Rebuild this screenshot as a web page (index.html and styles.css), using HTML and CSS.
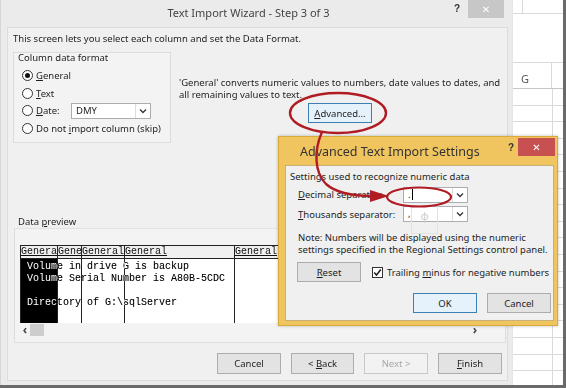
FILE: index.html
```html
<!DOCTYPE html>
<html>
<head>
<meta charset="utf-8">
<link rel="stylesheet" href="styles.css">
</head>
<body>
<div class="screen">
  <div class="wizard">
    <div class="wtitle">
      <span class="wtitle-text">Text Import Wizard - Step 3 of 3</span>
      <span class="help">?</span>
      <span class="xbtn xgrey">&#x2715;</span>
    </div>
    <div class="wclient">
      <p class="intro">This screen lets you select each column and set the Data Format.</p>
      <div class="toprow">
        <div class="group format">
          <div class="glabel">Column data format</div>
          <div class="radio"><span class="rb on"></span><span><u>G</u>eneral</span></div>
          <div class="radio"><span class="rb"></span><span><u>T</u>ext</span></div>
          <div class="radio"><span class="rb"></span><span class="datelbl"><u>D</u>ate:</span>
            <span class="combo datecombo"><span class="cval">DMY</span><span class="carrow"><svg width="8" height="6" viewBox="0 0 8 6"><path d="M1 1.5 L4 4.5 L7 1.5" fill="none" stroke="#333" stroke-width="1.3"/></svg></span></span>
          </div>
          <div class="radio"><span class="rb"></span><span>Do not <u>i</u>mport column (skip)</span></div>
        </div>
        <div class="desc">
          <p class="desctext">'General' converts numeric values to numbers, date values to dates, and<br>all remaining values to text.</p>
          <div class="btn focus advbtn"><span><u>A</u>dvanced...</span></div>
        </div>
      </div>
      <div class="plabel">Data <u>p</u>review</div>
      <div class="pgroup">
        <div class="preview">
          <div class="phead">
            <span class="pc c1"><u>Genera</u></span><span class="pc c2"><u>Gene</u></span><span class="pc c3"><u>General</u></span><span class="pc c4"><u>General</u></span><span class="pc c5"><u>General</u></span>
          </div>
          <div class="pbody">
            <div class="pcols">
              <span class="pcol c1 sel"></span><span class="pcol c2"></span><span class="pcol c3"></span><span class="pcol c4"></span><span class="pcol c5"></span>
            </div>
            <div class="ptext">
              <div class="pline"> Volume in drive G is backup</div>
              <div class="pline"> Volume Serial Number is A80B-5CDC</div>
              <div class="pline"> </div>
              <div class="pline"> Directory of G:\sqlServer</div>
            </div>
          </div>
          <div class="hscroll">
            <span class="sarrow">&lsaquo;</span><span class="thumb"></span><span class="sfill"></span><span class="sarrow">&rsaquo;</span>
          </div>
        </div>
      </div>
      <div class="buttons">
        <div class="btn"><span>Cancel</span></div>
        <div class="btn"><span>&lt; <u>B</u>ack</span></div>
        <div class="btn disabled"><span>Next &gt;</span></div>
        <div class="btn"><span><u>F</u>inish</span></div>
      </div>
    </div>
  </div>
  <div class="sheet">
    <div class="srow s0"><span class="scell a"></span><span class="scell b"></span></div>
    <div class="srow s1"></div>
    <div class="srow shead"><span class="scell g">G</span><span class="scell b"></span></div>
    <div class="srows"></div>
  </div>
</div>

<div class="adv">
  <div class="atitle">
    <span class="atitle-text">Advanced Text Import Settings</span>
    <span class="help ahelp">?</span>
    <span class="xbtn xred">&#x2715;</span>
  </div>
  <div class="aclient">
    <div class="asub">Settings used to recognize numeric data</div>
    <div class="arow">
      <span class="alabel"><u>D</u>ecimal separator:</span>
      <span class="combo acombo"><span class="cval">.<span class="caret"></span></span><span class="carrow"><svg width="8" height="6" viewBox="0 0 8 6"><path d="M1 1.5 L4 4.5 L7 1.5" fill="none" stroke="#333" stroke-width="1.3"/></svg></span></span>
    </div>
    <div class="arow">
      <span class="alabel"><u>T</u>housands separator:</span>
      <span class="combo acombo"><span class="cval">,</span><span class="carrow"><svg width="8" height="6" viewBox="0 0 8 6"><path d="M1 1.5 L4 4.5 L7 1.5" fill="none" stroke="#333" stroke-width="1.3"/></svg></span></span>
      <span class="ghost">ф</span>
    </div>
    <p class="anote">Note: Numbers will be displayed using the numeric<br>settings specified in the Regional Settings control panel.</p>
    <div class="arow2">
      <div class="btn"><span><u>R</u>eset</span></div>
      <div class="check"><span class="cb"><svg width="9" height="9" viewBox="0 0 9 9"><path d="M1.2 4.6 L3.5 7 L7.8 1.5" fill="none" stroke="#222" stroke-width="1.5"/></svg></span><span>Trailing <u>m</u>inus for negative numbers</span></div>
    </div>
    <div class="abtns">
      <div class="btn focus"><span>OK</span></div>
      <div class="btn"><span>Cancel</span></div>
    </div>
  </div>
</div>

<svg class="annot" width="566" height="388" viewBox="0 0 566 388">
  <ellipse cx="338" cy="113" rx="48" ry="20" fill="none" stroke="#b01c24" stroke-width="2.4"/>
  <ellipse cx="419" cy="197" rx="32" ry="9.5" fill="none" stroke="#b01c24" stroke-width="2.2"/>
  <path d="M322 132 C314 150 314 172 326 184 C336 193 352 196 372 196" fill="none" stroke="#b01c24" stroke-width="2.4"/>
  <path d="M370 190 L389 196 L370 202 Z" fill="#b01c24"/>
</svg>
</body>
</html>
```

FILE: styles.css
```css
* { box-sizing: border-box; }
html, body { margin: 0; padding: 0; }
body {
  width: 566px; height: 388px; overflow: hidden; position: relative;
  background: #6a6a6a;
  font-family: "Noto Sans", "Open Sans", sans-serif;
  font-size: 9.5px; color: #1e1e1e;
}
p { margin: 0; }
u { text-decoration: underline; text-underline-offset: 1px; }

.screen {
  display: flex; width: 563px; height: 385px; background: #fff;
}

/* ---------- wizard ---------- */
.wizard {
  width: 512px; height: 385px; background: #ebebeb;
  border-left: 1px solid #d6d6d6;
  display: flex; flex-direction: column;
}
.wtitle {
  height: 27px; display: flex; align-items: flex-start; position: relative;
}
.wtitle-text {
  flex: 1; text-align: center; padding: 5px 0 0 42px;
  font-size: 11px; color: #444;
}
.help {
  font-size: 10px; font-weight: bold; color: #333; margin-top: 3px; margin-right: 8px;
  font-family: "Liberation Sans", sans-serif;
}
.xbtn {
  width: 36px; height: 18px; display: flex; align-items: center; justify-content: center;
  color: #fff; font-size: 10px; font-family: "DejaVu Sans", sans-serif;
}
.xgrey { background: #c7c7c7; margin-right: 8px; }

.wclient {
  margin-left: 6px; width: 501px; height: 354px;
  background: #f0f0f0; border: 1px solid #dcdcdc;
  display: flex; flex-direction: column;
}
.intro { margin: 5px 0 0 5px; line-height: 12px; }

.toprow { display: flex; margin-top: 7px; height: 91px; }
.group { border: 1px solid #dcdcdc; background: #f3f3f3; }
.format {
  margin-left: 5px; width: 158px; height: 91px; padding: 0 0 0 8px;
}
.glabel { margin: -1px 0 0 -4px; line-height: 12px; }
.radio { display: flex; align-items: center; height: 17.5px; gap: 3px; }
.glabel + .radio { margin-top: 3px; }
.rb {
  width: 11px; height: 11px; border-radius: 50%; border: 1px solid #333; background: #fff;
  position: relative; flex: none;
}
.rb.on::after {
  content: ""; position: absolute; left: 2px; top: 2px; width: 5px; height: 5px;
  border-radius: 50%; background: #111;
}
.datelbl { width: 32px; }
.combo {
  display: inline-flex; background: #fff; border: 1px solid #abadb3; height: 16px;
}
.cval { flex: 1; padding-left: 4px; line-height: 14px; position: relative; }
.carrow {
  width: 15px; border-left: 1px solid #dcdcdc; display: flex; align-items: center; justify-content: center;
}
.datecombo { width: 80px; }

.desc { margin-left: 8px; padding-top: 25px; display: flex; flex-direction: column; }
.desctext { line-height: 12px; }
.advbtn { margin: 2px 0 0 129px; }

.btn {
  width: 64px; height: 20px; display: flex; align-items: center; justify-content: center;
  background: #e3e3e3; border: 1px solid #adadad; color: #1e1e1e; flex: none;
  white-space: pre;
}
.btn.focus { border-color: #3c7fb1; background: #e5f1fb; }
.btn.disabled { color: #a8a8a8; border-color: #c8c8c8; background: #f2f2f2; }

.plabel { margin: 73px 0 0 10px; line-height: 12px; }
.pgroup {
  margin: 0 0 0 6px; width: 492px; height: 115px;
  border: 1px solid #dcdcdc; border-top-color: #e2e2e2; background: #f3f3f3;
  padding: 16px 0 0 5px;
}
.preview { width: 460px; }
.phead {
  display: flex; height: 14px; background: #f0f0f0;
  border-top: 1.5px solid #222; border-left: 1.5px solid #222; border-bottom: 1.5px solid #222;
  font-family: "Liberation Mono", monospace; font-size: 10px; line-height: 12px; color: #111;
}
.pc { border-right: 1px solid #222; overflow: hidden; white-space: nowrap; }
.c1 { width: 37px; }
.c2 { width: 24px; }
.c3 { width: 43px; }
.c4 { width: 110px; }
.c5 { flex: 1; border-right: none; }
.pbody { position: relative; height: 64px; background: #fff; border-left: 1.5px solid #222; }
.pcols { display: flex; height: 64px; }
.pcol { border-right: 1px solid #222; }
.pcol.c5 { border-right: none; }
.pcol.sel { background: #000; }
.ptext {
  position: absolute; left: 0; top: 2px;
  font-family: "Liberation Mono", monospace; font-size: 10px; line-height: 12px;
  color: #fff; mix-blend-mode: difference;
}
.pline { white-space: pre; height: 12px; }
.hscroll { display: flex; align-items: center; height: 14px; background: #f3f3f3; }
.sarrow { width: 10px; text-align: center; font-size: 12px; font-weight: bold; color: #444; line-height: 12px; }
.thumb { width: 14px; height: 12px; background: #cdcdcd; }
.sfill { flex: 1; }

.buttons {
  display: flex; gap: 10px; justify-content: flex-end; margin: 10px 5px 0 0;
}
.buttons .btn { height: 21px; }
.buttons .btn:nth-child(2) { width: 63px; }

/* ---------- sheet ---------- */
.sheet { flex: 1; display: flex; flex-direction: column; border-left: 1px solid #e6e6e6; }
.srow { display: flex; border-bottom: 1px solid #dadada; }
.s0 { height: 14px; }
.s0 .a { width: 10px; border-right: 1px solid #dadada; }
.s1 { height: 49px; }
.shead { height: 26px; border-bottom-color: #c6c6c6; }
.scell.g { width: 39px; padding: 10px 0 0 8px; font-family: "Noto Sans", sans-serif; font-size: 11px; line-height: 12px; color: #555; border-right: 1px solid #dadada; }
.srows {
  flex: 1;
  background:
    linear-gradient(to right, transparent 39px, #dadada 39px, #dadada 40px, transparent 40px),
    repeating-linear-gradient(to bottom, transparent 0, transparent 15.6px, #dadada 15.6px, #dadada 16.6px);
}

/* ---------- advanced dialog ---------- */
.adv {
  position: absolute; left: 278px; top: 136px; width: 280px; height: 190px;
  background: #f0c55f; border: 1px solid #d9a93c;
  display: flex; flex-direction: column;
  box-shadow: 0 0 3px rgba(0,0,0,0.25);
}
.atitle { height: 28px; display: flex; align-items: flex-start; }
.atitle-text {
  flex: 1; padding: 6px 0 0 21px; font-size: 12.5px; color: #333;
}
.ahelp { margin-top: 5px; margin-right: 4px; }
.xred { background: #c75050; width: 37px; margin-top: 1px; margin-right: 2px; }
.aclient {
  margin: 0 3px 0 6px; height: 156px; background: #f0f0f0; border: 1px solid #c6b277;
  padding: 5px 0 0 4px; display: flex; flex-direction: column; position: relative;
}
.asub { line-height: 12px; }
.arow { display: flex; align-items: center; height: 19px; padding-left: 8px; position: relative; }
.arow + .arow { height: 20px; }
.asub + .arow { margin-top: 2px; }
.alabel { width: 105px; }
.acombo { width: 65px; }
.caret { display: inline-block; width: 1px; height: 11px; background: #000; vertical-align: -2px; margin-left: 1px; }
.ghost {
  position: absolute; left: 121px; top: 1px; width: 27px; height: 29px;
  border: 1px solid #e2e2e2; color: #ccc; font-size: 11px; text-align: center; line-height: 19px;
}
.anote { margin: 8px 0 0 8px; line-height: 12px; }
.arow2 { display: flex; align-items: center; margin: 6px 0 0 7px; gap: 11px; }
.arow2 .btn { height: 20px; }
.check { display: flex; align-items: center; gap: 4px; }
.cb { width: 11px; height: 11px; border: 1px solid #333; background: #fff; display: flex; align-items: center; justify-content: center; }
.abtns { display: flex; gap: 10px; justify-content: flex-end; margin: 11px 2px 0 0; }

.annot { position: absolute; left: 0; top: 0; pointer-events: none; }
```
